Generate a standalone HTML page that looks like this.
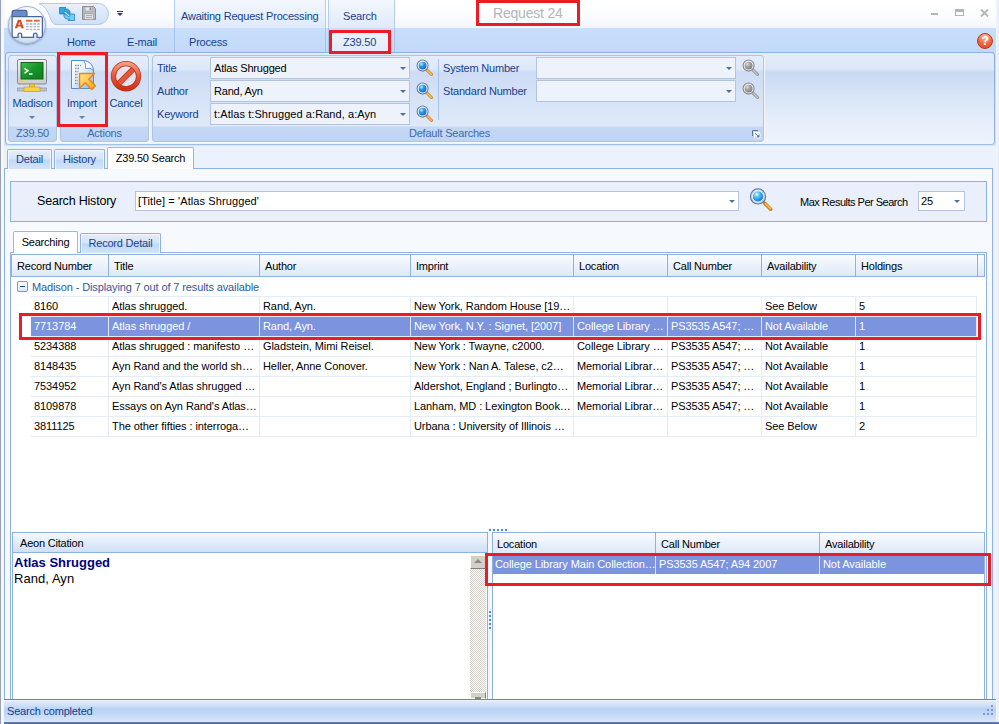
<!DOCTYPE html>
<html>
<head>
<meta charset="utf-8">
<title>Request 24</title>
<style>
*{box-sizing:border-box;margin:0;padding:0}
html,body{width:999px;height:724px;overflow:hidden;background:#ecf2fc}
body{font-family:"Liberation Sans",sans-serif;font-size:11px;color:#000;position:relative;letter-spacing:-.2px}
.a{position:absolute}
.t{position:absolute;white-space:nowrap;line-height:14px;height:14px}
.bl{color:#15428b}
/* title bar */
#title{left:0;top:0;width:999px;height:28px;background:linear-gradient(#ffffff,#fbfcff 60%,#f1f5fc)}
#tabrow{left:3px;top:28px;width:994px;height:25px;background:linear-gradient(#c8defb,#c1d9f8)}
#lborder{left:0;top:0;width:4px;height:724px;background:linear-gradient(90deg,#98a1b3 0,#98a1b3 1px,#f4f5f9 1px,#fbfbfd 2px,#f6f7fb 3px,#f0f3fa 4px)}
#rborder{left:996px;top:0;width:3px;height:721px;background:linear-gradient(90deg,#f4f7fc,#e6ecf6)}
.ctx{background:linear-gradient(#f3f7fe,#dfeafb);border-left:1px solid #b5cdf0;border-right:1px solid #b5cdf0}
.red{position:absolute;border:3px solid #ed1c24}
/* ribbon */
#ribbon{left:5px;top:52px;width:990px;height:93px;border:1px solid #8db2e3;border-bottom-color:#9cc3e6;border-radius:4px;background:linear-gradient(#e3ecfa 0,#dde7f8 16px,#c9daf4 19px,#e6eefb 66px,#eef3fc 92px)}
.grp{position:absolute;top:55px;height:87px;border:1px solid #afc3e2;border-radius:3px;background:linear-gradient(#e4edfb 0,#dde8f9 13px,#cddcf5 16px,#dfe9f9 70px,#c4d8f4 71px,#bfd5f3 100%);box-shadow:1px 1px 0 rgba(255,255,255,.7)}
.cap{position:absolute;top:126px;height:15px;line-height:15px;text-align:center;color:#3e6aaa}
.combo{position:absolute;height:22px;border:1px solid #b1c5e1;background:#eef3fb}
.arrow{position:absolute;width:0;height:0;border-left:3px solid transparent;border-right:3px solid transparent;border-top:3px solid #4d6fa8}
/* page tabs */
.tab{position:absolute;height:19px;box-shadow:inset 1px 1px 0 rgba(255,255,255,.65),inset -1px 0 0 rgba(255,255,255,.65);border:1px solid #8db2e3;border-bottom:none;border-radius:2px 2px 0 0;background:linear-gradient(#e4edfb 0,#d6e4f9 45%,#c3d8f6 55%,#d3e3f9 100%);color:#15428b;line-height:18px;text-align:center}
.tab.sel{background:#fff;color:#000;height:22px;border-color:#9ab7e3}
/* grid */
.hdr{position:absolute;height:21px;line-height:23px;background:linear-gradient(#fafcff,#dde8f8);border-right:1px solid #8fb0e0;padding-left:5px;white-space:nowrap;overflow:hidden}
.row{position:absolute;left:31px;width:946px;height:20px;letter-spacing:-.080px;border-bottom:1px solid #e3ecf9}
.row span{position:absolute;top:0;height:19px;line-height:19px;white-space:nowrap;overflow:hidden;padding-left:3px;border-right:1px solid #e3ecf9}
.row.sel{background:#7c93e0;color:#fff}
.row.sel span{border-right-color:#dfe6f8}
.row.b2 span{height:18px;line-height:16px}
</style>
</head>
<body>
<div class="a" id="title"></div>
<div class="a" id="tabrow"></div>

<!-- ======= title / quick access ======= -->
<div class="a ctx" style="left:174px;top:0;width:152px;height:28px"></div>
<div class="a ctx" style="left:328px;top:0;width:67px;height:28px"></div>
<div class="a" style="left:174px;top:28px;width:1px;height:24px;background:#a9c4ea"></div>
<div class="a" style="left:325px;top:28px;width:1px;height:24px;background:#a9c4ea"></div>
<div class="a" style="left:328px;top:28px;width:1px;height:24px;background:#a9c4ea"></div>
<div class="a" style="left:394px;top:28px;width:1px;height:24px;background:#a9c4ea"></div>
<div class="t bl" style="left:181px;top:9px">Awaiting Request Processing</div>
<div class="t bl" style="left:343px;top:9px">Search</div>
<div class="t bl" style="left:67px;top:35px">Home</div>
<div class="t bl" style="left:127px;top:35px">E-mail</div>
<div class="t bl" style="left:189px;top:35px">Process</div>
<div class="a" style="left:331px;top:31px;width:59px;height:22px;background:linear-gradient(#eef4fd,#dfeafb);border:1px solid #a9c4ea;border-bottom:none;border-radius:3px 3px 0 0"></div>
<div class="t bl" style="left:343px;top:35px">Z39.50</div>
<div class="t" style="left:493px;top:5px;font-size:14px;line-height:16px;height:16px;color:#b3b5b9">Request 24</div>
<!-- quick access toolbar pill -->
<svg class="a" style="left:36px;top:2px" width="76" height="24" viewBox="0 0 76 24"><defs><linearGradient id="qat" x1="0" y1="0" x2="0" y2="1"><stop offset="0" stop-color="#e9f1fc"/><stop offset="1" stop-color="#cfe0f7"/></linearGradient></defs><path d="M3 1.500H62a10.500 10.500 0 0 1 0 21H20C13 22.500 15 6 3 1.500Z" fill="url(#qat)" stroke="#b5c9e8"/></svg>
<svg class="a" style="left:59px;top:6px" width="16" height="16" viewBox="0 0 16 16"><path d="M.500 1.500H7L5.200 3.300C7.500 2.300 11 3 11.300 7.300H8C8 5.600 6 5 4.600 6L6.500 8H.500Z" fill="#2ea7e2" stroke="#1576b6" stroke-width=".7"/><path d="M15.500 14.500H9L10.800 12.700C8.500 13.700 5 13 4.700 8.700H8C8 10.400 10 11 11.400 10L9.500 8H15.500Z" fill="#6fd0f5" stroke="#1576b6" stroke-width=".7"/></svg>
<svg class="a" style="left:82px;top:6px" width="14" height="14" viewBox="0 0 14 14"><path d="M.5.5h11l2 2v11H.5z" fill="#b9bbbd" stroke="#8b8d90"/><rect x="3" y="1" width="7" height="4" fill="#e9eaeb" stroke="#97999c" stroke-width=".6"/><rect x="7.5" y="1.6" width="1.6" height="2.6" fill="#8b8d90"/><rect x="2.5" y="7.5" width="9" height="6" fill="#dcdddf" stroke="#97999c" stroke-width=".6"/><path d="M4 9.5h6M4 11.5h6" stroke="#a6a8ab" stroke-width=".8"/></svg>
<div class="a" style="left:117px;top:11px;width:6px;height:1px;background:#1c3f86"></div>
<div class="arrow" style="left:117px;top:13px;border-top-color:#1c3f86"></div>
<!-- application button -->
<div class="a" style="left:8px;top:6px;width:38px;height:38px;border-radius:50%;background:radial-gradient(circle at 50% 35%,#ffffff 0,#f4f7fc 45%,#cfdcf0 75%,#aebfdc 100%);border:1px solid #9fb2d3;box-shadow:0 1px 2px rgba(70,90,140,.5)"></div>
<svg class="a" style="left:10px;top:8px" width="34" height="32" viewBox="0 0 32 30"><path d="M2 4q0-2 2-2h10q2 0 2 2v4H2z" fill="#6a8ccb" stroke="#3d5a96" stroke-width="1"/><path d="M2 8h27q1.5 0 1.500 1.500V26q0 1.500-1.500 1.500h-3.500v-2.500q0-1.500-1.700-1.500t-1.700 1.500v2.500H11v-2.500q0-1.500-1.700-1.500t-1.700 1.500v2.500H3.500Q2 27.500 2 26z" fill="#fdfdff" stroke="#4a6598" stroke-width="1.200"/><path d="M4.500 19l3-8h2.600l3 8h-2.300l-.5-1.600H7.200L6.700 19zM7.800 15.700h2l-1-3z" fill="#d8491b"/><rect x="15" y="11" width="6" height="1.800" fill="#e4672f"/><rect x="22.500" y="11" width="5.500" height="1.800" fill="#e4672f"/><path d="M15 15h13M15 17.500h13M15 20h13" stroke="#a9b4c9" stroke-width="1.200" stroke-dasharray="2.500 1"/></svg>
<div class="a" style="left:925px;top:0;width:70px;height:26px">
<div class="a" style="left:6px;top:13px;width:7px;height:2px;background:#b2b4b8"></div>
<div class="a" style="left:30px;top:9px;width:9px;height:7px;border:1px solid #b2b4b8;border-top-width:3px"></div>
<svg class="a" style="left:55px;top:9px" width="9" height="8" viewBox="0 0 9 8"><path d="M1 .5l7 7M8 .5l-7 7" stroke="#b2b4b8" stroke-width="1.800"/></svg>
</div>
<!-- help icon -->
<div class="a" style="left:977px;top:33px;width:16px;height:16px;border-radius:50%;background:radial-gradient(circle at 50% 20%,#fcc3af,#ee6641 55%,#dc4520);border:1px solid #b53a1e;color:#fff;font-weight:bold;font-size:12px;line-height:14px;text-align:center">?</div>

<!-- ======= ribbon ======= -->
<div class="a" style="left:3px;top:52px;width:994px;height:94px;background:linear-gradient(#c3daf8,#d3e3f9)"></div>
<div class="a" id="ribbon"></div>
<div class="grp" style="left:8px;width:49px"></div>
<div class="grp" style="left:60px;width:89px"></div>
<div class="grp" style="left:152px;width:612px"></div>
<div class="cap" style="left:8px;width:49px">Z39.50</div>
<div class="cap" style="left:60px;width:89px">Actions</div>
<div class="cap" style="left:152px;width:611px;text-indent:-16px">Default Searches</div>
<!-- Madison icon -->
<svg class="a" style="left:17px;top:59px" width="30" height="33" viewBox="0 0 30 33"><defs><linearGradient id="scr" x1="0" y1="0" x2="1" y2="1"><stop offset="0" stop-color="#3fc04c"/><stop offset=".5" stop-color="#17952a"/><stop offset="1" stop-color="#0f7a1e"/></linearGradient><linearGradient id="mon" x1="0" y1="0" x2="0" y2="1"><stop offset="0" stop-color="#f4f4f5"/><stop offset="1" stop-color="#c9cbce"/></linearGradient></defs><rect x=".5" y=".5" width="29" height="24.500" rx="1.500" fill="url(#mon)" stroke="#85898f"/><rect x="4" y="3.500" width="22" height="16.500" fill="url(#scr)" stroke="#0c6417"/><path d="M7.500 9.500l3.500 2.300-3.500 2.300" stroke="#fff" stroke-width="1.500" fill="none"/><path d="M12 15h3.500" stroke="#fff" stroke-width="1.500"/><rect x="3.500" y="21" width="2.500" height="2" fill="#f7d038"/><rect x="12.500" y="25" width="5" height="4" fill="#f4c531" stroke="#c89416" stroke-width=".6"/><rect x=".5" y="29" width="29" height="3" fill="#bfc2c6" stroke="#8b8f94" stroke-width=".6"/><rect x="7" y="28" width="16" height="4.300" fill="#f8d247" stroke="#c89416" stroke-width=".6"/></svg>
<div class="t bl" style="left:9px;width:47px;text-align:center;top:96px">Madison</div>
<div class="arrow" style="left:29px;top:116px;border-top-color:#5c7fb8"></div>
<!-- Import icon -->
<svg class="a" style="left:67px;top:59px" width="32" height="33" viewBox="0 0 32 33"><defs><linearGradient id="pg" x1="0" y1="0" x2="1" y2="1"><stop offset="0" stop-color="#ffffff"/><stop offset=".45" stop-color="#e6f1fb"/><stop offset="1" stop-color="#7db6ea"/></linearGradient><linearGradient id="ar" x1="0" y1="0" x2="1" y2="1"><stop offset="0" stop-color="#ffe88a"/><stop offset="1" stop-color="#f9a51f"/></linearGradient></defs><path d="M4.500 1.500h12q9 1 10 10v18h-22z" fill="url(#pg)" stroke="#4f8fd4"/><path d="M16.500 1.500q3 3 2 8 5-1.500 8 2-1-9-10-10z" fill="#f4f9fe" stroke="#4f8fd4" stroke-width=".8"/><path d="M8 6.500h6M8 9.500h5M8 12.500h3.500M8 15.500h3M8 18.500h3M8 21.500h3M8 24.500h3" stroke="#7f8ea6" stroke-width="1.300" stroke-dasharray="1.500 1"/><path d="M12.500 14.500H27.500L21.800 20.200 28.400 26.700 24.700 30.400 18.200 23.800 12.500 29.500z" fill="url(#ar)" stroke="#ee8312" stroke-width="1.400" stroke-linejoin="round"/></svg>
<div class="t bl" style="left:57px;width:50px;text-align:center;top:96px">Import</div>
<div class="arrow" style="left:79px;top:116px;border-top-color:#5c7fb8"></div>
<!-- Cancel icon -->
<svg class="a" style="left:110px;top:60px" width="32" height="32" viewBox="0 0 32 32"><defs><linearGradient id="cn" x1="0" y1="0" x2="0" y2="1"><stop offset="0" stop-color="#f59a84"/><stop offset=".5" stop-color="#e6573a"/><stop offset="1" stop-color="#cf2f13"/></linearGradient></defs><circle cx="16" cy="16.300" r="12.600" fill="#f6e4e4" fill-opacity=".55"/><path d="M7.500 24.800L24.500 7.800" stroke="#b8371c" stroke-width="5.600"/><path d="M7.500 24.800L24.500 7.800" stroke="#e6573a" stroke-width="4.200"/><circle cx="16" cy="16.300" r="12.600" fill="none" stroke="#b8371c" stroke-width="5.200"/><circle cx="16" cy="16.300" r="12.600" fill="none" stroke="url(#cn)" stroke-width="3.800"/></svg>
<div class="t bl" style="left:105px;width:42px;text-align:center;top:96px">Cancel</div>
<!-- search fields -->
<div class="t bl" style="left:157px;top:61px">Title</div>
<div class="t bl" style="left:157px;top:84px">Author</div>
<div class="t bl" style="left:157px;top:107px">Keyword</div>
<div class="combo" style="left:210px;top:57px;width:200px"></div>
<div class="combo" style="left:210px;top:80px;width:200px"></div>
<div class="combo" style="left:210px;top:103px;width:200px"></div>
<div class="t" style="left:214px;top:61px">Atlas Shrugged</div>
<div class="t" style="left:214px;top:84px">Rand, Ayn</div>
<div class="t" style="left:214px;top:107px;letter-spacing:.070px">t:Atlas t:Shrugged a:Rand, a:Ayn</div>
<div class="arrow" style="left:400px;top:67px"></div>
<div class="arrow" style="left:400px;top:90px"></div>
<div class="arrow" style="left:400px;top:113px"></div>
<svg width="0" height="0" style="position:absolute"><defs>
<radialGradient id="lens" cx=".35" cy=".3" r=".8"><stop offset="0" stop-color="#c8efff"/><stop offset=".35" stop-color="#2fa4ec"/><stop offset="1" stop-color="#0b5fc4"/></radialGradient>
<radialGradient id="lensg" cx=".35" cy=".3" r=".8"><stop offset="0" stop-color="#dedede"/><stop offset=".4" stop-color="#a5a5a5"/><stop offset="1" stop-color="#7a7a7a"/></radialGradient>
<symbol id="mag" viewBox="0 0 16 16"><path d="M10 10l4.600 4.600" stroke="#c9862a" stroke-width="2.800" stroke-linecap="round"/><path d="M10.200 10.200l4.300 4.300" stroke="#fbc060" stroke-width="1.300" stroke-linecap="round"/><circle cx="6.200" cy="6.200" r="5.200" fill="#f4f8fd" stroke="#6379a3" stroke-width="1"/><circle cx="6.200" cy="6.200" r="3.700" fill="url(#lens)"/></symbol>
<symbol id="magg" viewBox="0 0 16 16"><path d="M10 10l4.600 4.600" stroke="#8f8f8f" stroke-width="2.800" stroke-linecap="round"/><path d="M10.200 10.200l4.300 4.300" stroke="#c9c9c9" stroke-width="1.300" stroke-linecap="round"/><circle cx="6.200" cy="6.200" r="5.200" fill="#efefef" stroke="#858585" stroke-width="1"/><circle cx="6.200" cy="6.200" r="3.700" fill="url(#lensg)"/></symbol>
</defs></svg>
<svg class="a" style="left:416px;top:59px" width="17" height="17"><use href="#mag"/></svg>
<svg class="a" style="left:416px;top:82px" width="17" height="17"><use href="#mag"/></svg>
<svg class="a" style="left:416px;top:105px" width="17" height="17"><use href="#mag"/></svg>
<div class="a" style="left:438px;top:59px;width:1px;height:61px;background:#a9c3e8"></div>
<div class="t bl" style="left:443px;top:61px">System Number</div>
<div class="t bl" style="left:443px;top:84px">Standard Number</div>
<div class="combo" style="left:536px;top:57px;width:200px"></div>
<div class="combo" style="left:536px;top:80px;width:200px"></div>
<div class="arrow" style="left:726px;top:67px"></div>
<div class="arrow" style="left:726px;top:90px"></div>
<svg class="a" style="left:742px;top:59px" width="17" height="17"><use href="#magg"/></svg>
<svg class="a" style="left:742px;top:82px" width="17" height="17"><use href="#magg"/></svg>
<svg class="a" style="left:752px;top:130px" width="9" height="9" viewBox="0 0 9 9"><path d="M1.500 7V1.500H7" fill="none" stroke="#fff" stroke-width="1" transform="translate(1,1)"/><path d="M.500 6V.500H6" fill="none" stroke="#5b78ad"/><rect x="3.500" y="3.500" width="5" height="5" fill="#fff"/><path d="M3 3l3.500 3.500" stroke="#5b78ad"/><path d="M4 7.500H7.500V4z" fill="#5b78ad"/></svg>

<!-- ======= page tabs ======= -->
<div class="a" style="left:4px;top:168px;width:989px;height:532px;border:1px solid #8db2e3;background:#f6f9fe"></div>
<div class="tab" style="left:7px;top:149px;width:45px;height:20px">Detail</div>
<div class="tab" style="left:54px;top:149px;width:51px;height:20px">History</div>
<div class="tab sel" style="left:107px;top:147px;width:87px;line-height:20px">Z39.50 Search</div>

<!-- search history -->
<div class="a" style="left:10px;top:181px;width:977px;height:41px;border:1px solid #8db2e3;background:#e9f0fc"></div>
<div class="t" style="left:37px;top:194px;font-size:12.500px;line-height:15px;height:15px">Search History</div>
<div class="combo" style="left:135px;top:191px;width:604px;height:20px;background:#fff"></div>
<div class="t" style="left:138px;top:194px;letter-spacing:.100px">[Title] = 'Atlas Shrugged'</div>
<div class="arrow" style="left:729px;top:200px"></div>
<svg class="a" style="left:749px;top:187px" width="24" height="25" viewBox="0 0 24 25"><defs><radialGradient id="lensb" cx=".38" cy=".32" r=".75"><stop offset="0" stop-color="#eafaff"/><stop offset=".3" stop-color="#62c6f8"/><stop offset=".7" stop-color="#1a8fe6"/><stop offset="1" stop-color="#0f6fd0"/></radialGradient></defs><path d="M14 14.500l2.500 2.500" stroke="#8a93a6" stroke-width="3"/><path d="M16.200 16.700l5.500 5.500" stroke="#c47d18" stroke-width="3.600" stroke-linecap="round"/><path d="M16.400 16.600l5.100 5.100" stroke="#fbb949" stroke-width="1.800" stroke-linecap="round"/><circle cx="9" cy="9.400" r="7.600" fill="#c6d1e4" stroke="#5f74a0" stroke-width="1.100"/><circle cx="9" cy="9.400" r="5.600" fill="url(#lensb)" stroke="#f6f9fd" stroke-width=".9"/></svg>
<div class="t" style="left:800px;top:195px;letter-spacing:-.500px">Max Results Per Search</div>
<div class="combo" style="left:918px;top:191px;width:47px;height:20px;background:#fff"></div>
<div class="t" style="left:921px;top:194px">25</div>
<div class="arrow" style="left:954px;top:200px"></div>

<!-- inner tabs -->
<div class="a" style="left:10px;top:252px;width:977px;height:447px;border:1px solid #8db2e3;border-bottom:none;background:#fff"></div>
<div class="tab sel" style="left:13px;top:231px;width:65px;line-height:20px">Searching</div>
<div class="tab" style="left:80px;top:233px;width:81px;height:20px">Record Detail</div>

<!-- grid -->
<div class="a" style="left:11px;top:254px;width:974px;height:23px;border:1px solid #8fb0e0;background:linear-gradient(#fafcff,#dde8f8)"></div>
<div class="hdr" style="left:12px;top:255px;width:97px">Record Number</div>
<div class="hdr" style="left:109px;top:255px;width:151px">Title</div>
<div class="hdr" style="left:260px;top:255px;width:151px">Author</div>
<div class="hdr" style="left:411px;top:255px;width:163px">Imprint</div>
<div class="hdr" style="left:574px;top:255px;width:94px">Location</div>
<div class="hdr" style="left:668px;top:255px;width:94px">Call Number</div>
<div class="hdr" style="left:762px;top:255px;width:94px">Availability</div>
<div class="hdr" style="left:856px;top:255px;width:122px">Holdings</div>
<div class="a" style="left:31px;top:296px;width:946px;height:1px;background:#e3ecf9"></div>
<div class="a" style="left:17px;top:281px;width:11px;height:11px;border:1px solid #7f96bd;border-radius:2px;background:linear-gradient(#fff,#dce6f6)"></div>
<div class="a" style="left:20px;top:286px;width:5px;height:1px;background:#233f73"></div>
<div class="t" style="left:32px;top:280px;color:#2c5aa0;letter-spacing:-.120px">Madison - Displaying 7 out of 7 results available</div>
<div class="row" style="top:297px"><span style="left:0px;width:78px;padding-left:3px">8160</span><span style="left:78px;width:151px">Atlas shrugged.</span><span style="left:229px;width:151px">Rand, Ayn.</span><span style="left:380px;width:163px">New York, Random House [19…</span><span style="left:543px;width:94px"></span><span style="left:637px;width:94px"></span><span style="left:731px;width:94px">See Below</span><span style="left:825px;width:121px">5</span></div>
<div class="row sel" style="top:317px"><span style="left:0px;width:78px;padding-left:3px">7713784</span><span style="left:78px;width:151px">Atlas shrugged /</span><span style="left:229px;width:151px">Rand, Ayn.</span><span style="left:380px;width:163px">New York, N.Y. : Signet, [2007]</span><span style="left:543px;width:94px">College Library …</span><span style="left:637px;width:94px">PS3535 A547; …</span><span style="left:731px;width:94px">Not Available</span><span style="left:825px;width:121px">1</span></div>
<div class="row" style="top:337px"><span style="left:0px;width:78px;padding-left:3px">5234388</span><span style="left:78px;width:151px">Atlas shrugged : manifesto …</span><span style="left:229px;width:151px">Gladstein, Mimi Reisel.</span><span style="left:380px;width:163px">New York : Twayne, c2000.</span><span style="left:543px;width:94px">College Library …</span><span style="left:637px;width:94px">PS3535 A547; …</span><span style="left:731px;width:94px">Not Available</span><span style="left:825px;width:121px">1</span></div>
<div class="row" style="top:357px"><span style="left:0px;width:78px;padding-left:3px">8148435</span><span style="left:78px;width:151px">Ayn Rand and the world sh…</span><span style="left:229px;width:151px">Heller, Anne Conover.</span><span style="left:380px;width:163px">New York : Nan A. Talese, c2…</span><span style="left:543px;width:94px">Memorial Librar…</span><span style="left:637px;width:94px">PS3535 A547; …</span><span style="left:731px;width:94px">Not Available</span><span style="left:825px;width:121px">1</span></div>
<div class="row" style="top:377px"><span style="left:0px;width:78px;padding-left:3px">7534952</span><span style="left:78px;width:151px">Ayn Rand's Atlas shrugged …</span><span style="left:229px;width:151px"></span><span style="left:380px;width:163px">Aldershot, England ; Burlingto…</span><span style="left:543px;width:94px">Memorial Librar…</span><span style="left:637px;width:94px">PS3535 A547; …</span><span style="left:731px;width:94px">Not Available</span><span style="left:825px;width:121px">1</span></div>
<div class="row" style="top:397px"><span style="left:0px;width:78px;padding-left:3px">8109878</span><span style="left:78px;width:151px">Essays on Ayn Rand's Atlas…</span><span style="left:229px;width:151px"></span><span style="left:380px;width:163px">Lanham, MD : Lexington Book…</span><span style="left:543px;width:94px">Memorial Librar…</span><span style="left:637px;width:94px">PS3535 A547; …</span><span style="left:731px;width:94px">Not Available</span><span style="left:825px;width:121px">1</span></div>
<div class="row" style="top:417px"><span style="left:0px;width:78px;padding-left:3px">3811125</span><span style="left:78px;width:151px">The other fifties : interroga…</span><span style="left:229px;width:151px"></span><span style="left:380px;width:163px">Urbana : University of Illinois …</span><span style="left:543px;width:94px"></span><span style="left:637px;width:94px"></span><span style="left:731px;width:94px">See Below</span><span style="left:825px;width:121px">2</span></div>



<!-- bottom left: Aeon Citation -->
<div class="a" style="left:12px;top:532px;width:476px;height:21px;border:1px solid #8fb0e0;background:linear-gradient(#f4f8fe,#cfe0f7)"></div>
<div class="t" style="left:20px;top:536px">Aeon Citation</div>
<div class="a" style="left:12px;top:553px;width:476px;height:147px;border:1px solid #8fb0e0;border-top:none;background:#fff"></div>
<div class="t" style="left:14px;top:555px;font-size:13px;font-weight:bold;color:#000080;line-height:16px;height:16px;letter-spacing:0">Atlas Shrugged</div>
<div class="t" style="left:14px;top:571px;font-size:13px;line-height:16px;height:16px;letter-spacing:0.050px">Rand, Ayn</div>
<div class="a" style="left:470px;top:555px;width:16px;height:144px;background:#e9e7e3;background-image:repeating-conic-gradient(#d4d0c8 0 25%,#ffffff 0 50%);background-size:2px 2px"></div>
<div class="a" style="left:470px;top:555px;width:16px;height:14px;background:#d4d0c8;border:1px solid #fbfaf8;border-right-color:#808080;border-bottom-color:#808080"></div>
<div class="a" style="left:474px;top:559px;width:0;height:0;border-left:4px solid transparent;border-right:4px solid transparent;border-bottom:4px solid #8a8a8a"></div>
<div class="a" style="left:470px;top:692px;width:16px;height:7px;background:#d4d0c8;border:1px solid #fbfaf8;border-right-color:#808080"></div><div class="a" style="left:475px;top:697px;width:6px;height:2px;background:#8a8a8a"></div>
<!-- splitter -->
<div class="a" style="left:488px;top:528px;width:4px;height:171px;background:#f3f7fd"></div>
<div class="a" style="left:489px;top:529px;width:18px;height:2px;background:repeating-linear-gradient(90deg,#4d8ae0 0 2px,transparent 2px 4px)"></div>
<div class="a" style="left:489px;top:611px;width:2px;height:18px;background:repeating-linear-gradient(#4d8ae0 0 2px,transparent 2px 4px)"></div>
<!-- bottom right grid -->
<div class="a" style="left:492px;top:532px;width:493px;height:167px;border:1px solid #8fb0e0;border-bottom:none;background:#fff"></div>
<div class="a" style="left:493px;top:533px;width:491px;height:20px;background:linear-gradient(#fafcff,#dde8f8);border-bottom:1px solid #8fb0e0"></div>
<div class="hdr" style="left:493px;top:533px;width:163px;height:20px;padding-left:4px">Location</div>
<div class="hdr" style="left:656px;top:533px;width:164px;height:20px">Call Number</div>
<div class="hdr" style="left:820px;top:533px;width:164px;height:20px;border-right:none">Availability</div>
<div class="row sel b2" style="left:493px;top:556px;width:491px;height:18px;border-bottom:none">
<span style="left:0;width:163px;padding-left:2px">College Library Main Collection…</span><span style="left:163px;width:164px">PS3535 A547; A94 2007</span><span style="left:327px;width:164px;border-right:none">Not Available</span></div>

<!-- status bar -->
<div class="a" style="left:0;top:699px;width:999px;height:25px;background:linear-gradient(#f4f8fe 0,#e0ebfb 1px,#cddef8 6px,#b9d2f5 9px,#bcd4f6 12px,#cfe0f8 18px,#d9e6fa 22px);border-top:1px solid #5f88c8"></div>
<div class="t bl" style="left:7px;top:704px">Search completed</div>
<div class="a" style="left:0;top:722px;width:999px;height:2px;background:linear-gradient(#6f8cc0,#40609c)"></div>
<svg class="a" style="left:983px;top:705px" width="11" height="11" viewBox="0 0 11 11"><g fill="#7d9ccc"><rect x="8" y="0" width="2" height="2"/><rect x="4" y="4" width="2" height="2"/><rect x="8" y="4" width="2" height="2"/><rect x="0" y="8" width="2" height="2"/><rect x="4" y="8" width="2" height="2"/><rect x="8" y="8" width="2" height="2"/></g></svg>

<!-- window borders -->
<div class="a" id="lborder"></div>
<div class="a" id="rborder"></div>

<!-- red annotation boxes -->
<div class="red" style="left:476px;top:0;width:104px;height:26px"></div>
<div class="red" style="left:329px;top:30px;width:62px;height:24px"></div>
<div class="red" style="left:57px;top:52px;width:51px;height:75px"></div>
<div class="red" style="left:19px;top:313px;width:962px;height:27px"></div>
<div class="red" style="left:485px;top:553px;width:506px;height:33px"></div>

</body>
</html>
